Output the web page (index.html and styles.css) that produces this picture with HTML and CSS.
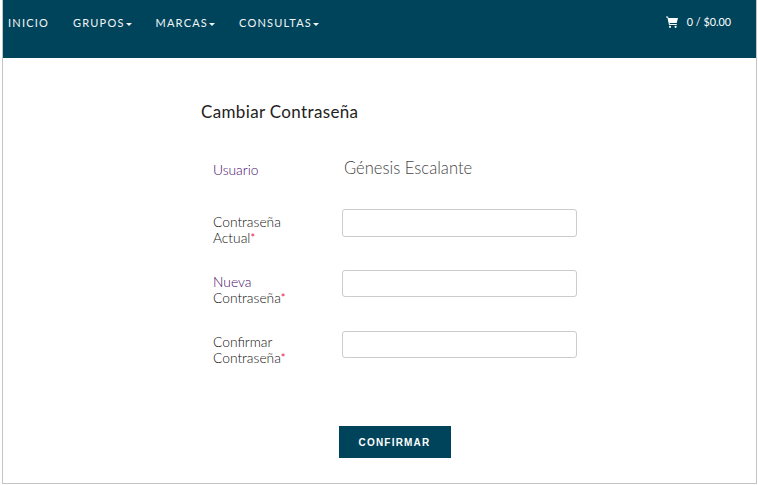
FILE: index.html
```html
<!DOCTYPE html>
<html lang="es">
<head>
    <meta charset="UTF-8">
    <meta name="viewport" content="width=device-width, initial-scale=1.0">
    <title>Cambiar Contraseña</title>
    <link rel="stylesheet" href="styles.css">
</head>
<body>
    <div class="page">
        <nav class="navbar">
            <ul class="menu">
                <li><a href="#">INICIO</a></li>
                <li><a href="#">GRUPOS<span class="caret"></span></a></li>
                <li><a href="#">MARCAS<span class="caret"></span></a></li>
                <li><a href="#">CONSULTAS<span class="caret"></span></a></li>
            </ul>
            <a class="cart" href="#">
                <svg class="cart-icon" width="12" height="12" viewBox="0 0 12 12">
                    <path d="M0 .6h2l.5 1.5H12l-1.3 5H3.6l.2 1h7v1H3L1.4 1.6H0z" fill="#fff"/>
                    <circle cx="4" cy="10.8" r="1.1" fill="#fff"/>
                    <circle cx="9.6" cy="10.8" r="1.1" fill="#fff"/>
                </svg>
                <span>0 / $0.00</span>
            </a>
        </nav>

        <main class="content">
            <h1>Cambiar Contraseña</h1>
            <form class="form">
                <div class="row row-user">
                    <label class="purple">Usuario</label>
                    <span class="user-name">Génesis Escalante</span>
                </div>
                <div class="row row-first">
                    <label for="actual">Contraseña<br>Actual<span class="req">*</span></label>
                    <input type="password" id="actual">
                </div>
                <div class="row">
                    <label for="nueva"><span class="purple">Nueva</span><br>Contraseña<span class="req">*</span></label>
                    <input type="password" id="nueva">
                </div>
                <div class="row row-last">
                    <label for="confirmar">Confirmar<br>Contraseña<span class="req">*</span></label>
                    <input type="password" id="confirmar">
                </div>
                <div class="actions">
                    <button type="button">CONFIRMAR</button>
                </div>
            </form>
        </main>
    </div>
</body>
</html>
```

FILE: styles.css
```css
html, body {
    height: 100%;
}
body {
    margin: 0;
    background-color: #fff;
    font-family: "Lato", sans-serif;
    overflow: hidden;
}
.page {
    box-sizing: border-box;
    width: 755px;
    height: 484px;
    margin-left: 2px;
    border-left: 1px solid #c4c4c4;
    border-right: 1px solid #c4c4c4;
    border-bottom: 1px solid #c4c4c4;
}
.navbar {
    display: flex;
    justify-content: space-between;
    align-items: flex-start;
    height: 58px;
    background-color: #00445c;
}
.menu {
    display: flex;
    gap: 24px;
    list-style: none;
    margin: 0;
    padding: 11px 0 0 5px;
}
.menu a {
    color: #f2f5f6;
    font-size: 11px;
    line-height: 15px;
    letter-spacing: 1.2px;
    text-decoration: none;
    white-space: nowrap;
}
.caret {
    display: inline-block;
    margin-left: 1px;
    vertical-align: middle;
    border-top: 3px solid #f2f5f6;
    border-left: 3.5px solid transparent;
    border-right: 3.5px solid transparent;
}
.cart {
    display: flex;
    align-items: center;
    gap: 9px;
    margin: 15px 25px 0 0;
    color: #fff;
    font-size: 10.8px;
    line-height: 14px;
    text-decoration: none;
}
.content {
    padding: 44px 0 0 198px;
}
h1 {
    margin: 0;
    color: #222;
    font-size: 17px;
    font-weight: 400;
    line-height: 20px;
    letter-spacing: 0.35px;
}
.form {
    margin-top: 31px;
    width: 376px;
}
.row {
    display: flex;
    align-items: flex-start;
    padding-left: 12px;
    height: 61px;
}
.row-user {
    height: 56px;
}
.row label {
    width: 129px;
    flex-shrink: 0;
    padding-top: 4px;
    color: #111;
    font-size: 13.8px;
    font-weight: 300;
    line-height: 16px;
}
.row-user label {
    padding-top: 9px;
}
.row-first label {
    padding-top: 5px;
}
.row-last label {
    padding-top: 3px;
}
.purple {
    color: #45086a !important;
}
.req {
    color: #e8204a;
    font-size: 11px;
    font-weight: 400;
    vertical-align: top;
}
.user-name {
    padding: 5px 0 0 2px;
    color: #444;
    font-size: 16.6px;
    font-weight: 300;
    line-height: 20px;
}
.row input {
    box-sizing: border-box;
    width: 235px;
    height: 27px;
    padding: 4px 8px;
    background-color: #fff;
    border: 1px solid #ccc;
    border-radius: 3px;
}
.row-first input {
    height: 28px;
}
.actions {
    display: flex;
    justify-content: center;
    padding: 34px 0 0 0;
    margin-left: 76px;
    width: 235px;
}
button {
    width: 112px;
    height: 32px;
    background-color: #00445c;
    color: #fff;
    border: none;
    font-family: "Liberation Sans", sans-serif;
    font-size: 10px;
    font-weight: bold;
    letter-spacing: 1.2px;
    cursor: pointer;
}
```
